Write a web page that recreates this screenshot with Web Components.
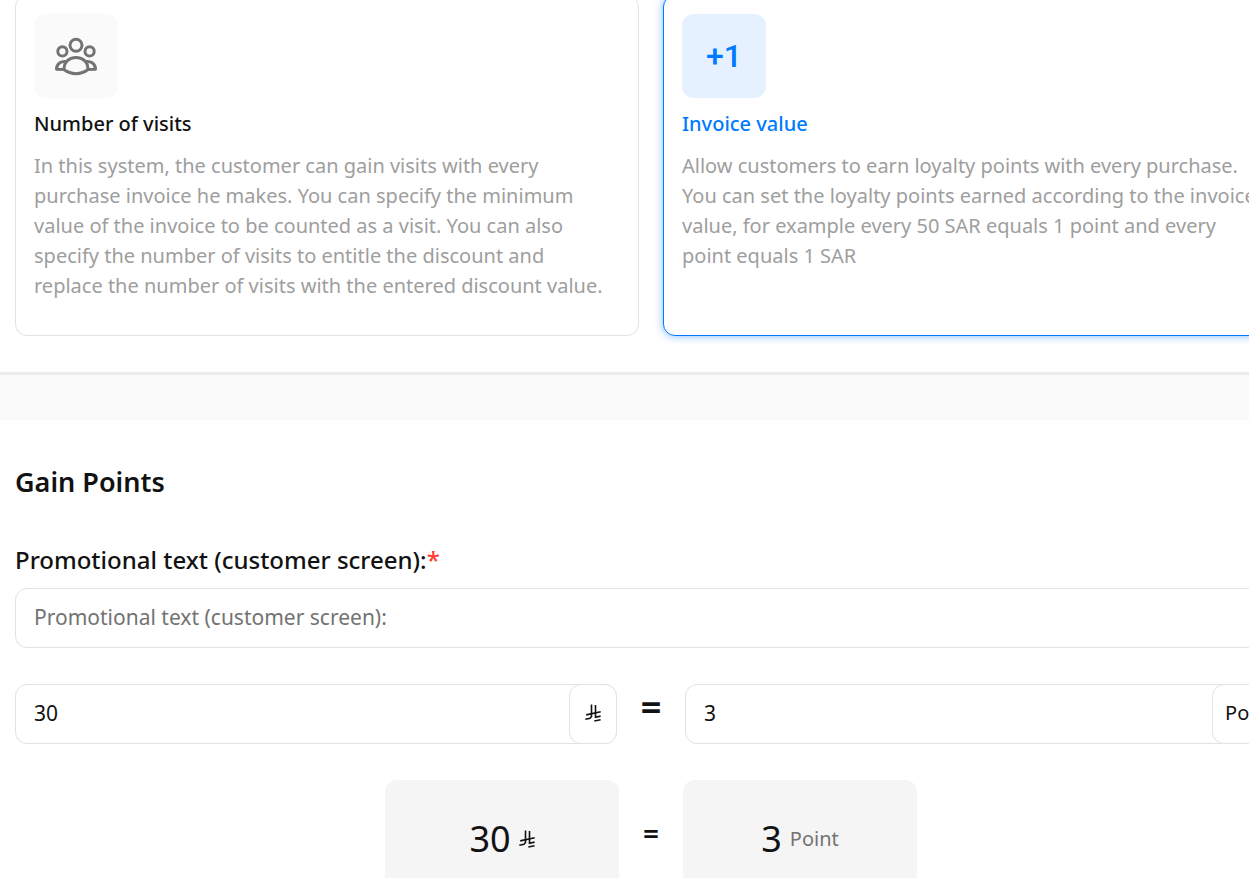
<!DOCTYPE html>
<html lang="en">
<head>
<meta charset="utf-8">
<title>Loyalty system</title>
<style>
    html { overflow: hidden; }
    body {
        --text: #121212;
        --muted: #737373;
        --soft: #9e9e9e;
        --line: #e2e2e2;
        --primary: #007aff;
        margin: 0;
        background: #fff;
        color: var(--text);
        font-family: "Noto Sans", sans-serif;
        font-size: 20px;
        line-height: 30px;
    }
</style>
</head>
<body>
<loyalty-page>
    <system-card slot="systems" heading="Number of visits">
        <svg slot="icon" width="44" height="44" viewBox="0 0 44 44" fill="none" stroke="#737373" stroke-width="3" stroke-linejoin="round">
            <circle cx="22" cy="11.300" r="6"/>
            <circle cx="8.400" cy="17.400" r="4.600"/>
            <circle cx="35.600" cy="17.400" r="4.600"/>
            <path d="M10 35.500C10 28 15 23.500 22 23.500S34 28 34 35.500C27 41 17 41 10 35.500Z"/>
            <path d="M13 27.800C7 26.500 2.500 30 2.500 35.200L10 35.500M31 27.800C37 26.500 41.500 30 41.500 35.200L34 35.500"/>
        </svg>
        In this system, the customer can gain visits with every purchase invoice he makes. You can specify the minimum value of the invoice to be counted as a visit. You can also specify the number of visits to entitle the discount and replace the number of visits with the entered discount value.
    </system-card>
    <system-card slot="systems" heading="Invoice value" active>
        <span slot="icon">+1</span>
        Allow customers to earn loyalty points with every purchase. You can set the loyalty points earned according to the invoice value, for example every 50 SAR equals 1 point and every point equals 1 SAR
    </system-card>

    <gain-points></gain-points>
</loyalty-page>

<script>
class LoyaltyPage extends HTMLElement {
    constructor() {
        super();
        this.attachShadow({ mode: 'open' })
            .innerHTML = `<style>
                            :host { display: block; width: calc(100% + 53px); }
                            .systems { display: grid; grid-template-columns: 1fr 1fr; gap: 24px;
                                margin-top: -5px; padding: 0 15px 36px; border-bottom: 3px solid #ebebeb; }
                            .divider { height: 45px; background: #fafafa; }
                        </style>
                        <section class="systems"><slot name="systems"></slot></section>
                        <div class="divider"></div>
                        <slot></slot>`;
    }
}
window.customElements.define('loyalty-page', LoyaltyPage);

class SystemCard extends HTMLElement {
    constructor() {
        super();
        this.attachShadow({ mode: 'open' })
            .innerHTML = `<style>
                            :host { display: block; box-sizing: border-box; padding: 18px 18px 34px;
                                border: 1px solid var(--line); border-radius: 12px; background: #fff; }
                            .icon { display: flex; align-items: center; justify-content: center;
                                width: 84px; height: 84px; border-radius: 12px; background: #fafafa; }
                            h3 { margin: 11px 0 12px; font-size: 20px; line-height: 30px; font-weight: 500; }
                            p { margin: 0; padding-right: 12px; color: var(--soft); }
                            ::slotted(span) { font-family: Roboto, sans-serif; font-size: 32px; font-weight: 500; }
                            :host([active]) { border-color: var(--primary); box-shadow: 0 0 8px rgba(0, 122, 255, .5); }
                            :host([active]) .icon { background: #e5f1ff; color: var(--primary); }
                            :host([active]) h3 { color: var(--primary); }
                        </style>
                        <div class="icon"><slot name="icon"></slot></div>
                        <h3></h3>
                        <p><slot></slot></p>`;
    }

    connectedCallback() {
        this.shadowRoot.querySelector('h3').textContent = this.getAttribute('heading');
    }
}
window.customElements.define('system-card', SystemCard);

// Saudi riyal sign
class RiyalSign extends HTMLElement {
    constructor() {
        super();
        this.attachShadow({ mode: 'open' })
            .innerHTML = `<style>
                            :host { display: inline-flex; }
                            svg { display: block; width: 16px; height: 18px; fill: none;
                                stroke: currentColor; stroke-width: 1.600; }
                        </style>
                        <svg viewBox="0 0 16 18" role="img" aria-label="SAR">
                            <path d="M6.500 .5V12.500L5 14.300L.3 15.300M10.500 1V13.200L15.600 12.100"/>
                            <path d="M1.200 10.900L15.700 7.800M9.300 17L15.600 15.700"/>
                        </svg>`;
    }
}
window.customElements.define('riyal-sign', RiyalSign);

// number box with its unit in a tab at the end
class UnitInput extends HTMLElement {
    constructor() {
        super();
        this.attachShadow({ mode: 'open' })
            .innerHTML = `<style>
                            :host { display: flex; box-sizing: border-box; height: 60px;
                                border: 1px solid var(--line); border-radius: 12px; }
                            input { flex: 1; min-width: 0; box-sizing: border-box; padding: 0 18px 2px; border: 0;
                                background: none; outline: none; color: inherit; font: inherit; }
                            label { display: flex; align-items: center; justify-content: center; box-sizing: border-box;
                                min-width: 48px; margin: -1px; padding: 0 12px 2px; border: 1px solid var(--line);
                                border-radius: 12px; background: #fff; font-size: 20px; }
                        </style>
                        <input type="text" inputmode="numeric" id="amount">
                        <label for="amount"><slot></slot></label>`;
    }

    connectedCallback() {
        this.shadowRoot.querySelector('input').value = this.getAttribute('value');
    }
}
window.customElements.define('unit-input', UnitInput);

class PointTile extends HTMLElement {
    constructor() {
        super();
        this.attachShadow({ mode: 'open' })
            .innerHTML = `<style>
                            :host { display: flex; align-items: center; justify-content: center; gap: 8px;
                                box-sizing: border-box; width: 234px; height: 118px;
                                border-radius: 12px; background: #f5f5f5; }
                            b { font-size: 36px; line-height: 54px; font-weight: 400; }
                            ::slotted(span) { color: var(--muted); }
                        </style>
                        <b></b><slot></slot>`;
    }

    connectedCallback() {
        this.shadowRoot.querySelector('b').textContent = this.getAttribute('value');
    }
}
window.customElements.define('point-tile', PointTile);

class GainPoints extends HTMLElement {
    constructor() {
        super();
        this.attachShadow({ mode: 'open' })
            .innerHTML = `<style>
                            :host { display: block; padding: 41px 15px; }
                            h2 { margin: 0 0 39px; font-size: 27px; line-height: 42px; font-weight: 600; }
                            .label { display: block; margin-bottom: 10px; font-size: 24px; line-height: 36px; font-weight: 500; }
                            .label span { color: #ff3b30; }
                            .promo { display: block; box-sizing: border-box; width: 100%; height: 60px; padding: 0 18px 2px;
                                border: 1px solid var(--line); border-radius: 12px; outline: none;
                                color: inherit; font: inherit; font-size: 21px; }
                            .promo::placeholder { color: var(--muted); opacity: 1; }
                            .rate { display: grid; grid-template-columns: 1fr 68px 1fr; margin-top: 36px; font-size: 21px; }
                            .preview { display: flex; align-items: center; justify-content: center; margin-top: 36px; }
                            .equals { width: 64px; padding-bottom: 12px; font-size: 28px; line-height: 42px;
                                font-weight: 600; text-align: center; }
                            .rate .equals { width: auto; padding: 0; font-size: 36px; line-height: 46px; font-weight: 700; }
                        </style>
                        <h2>Gain Points</h2>
                        <label class="label" for="promo">Promotional text (customer screen):<span>*</span></label>
                        <input class="promo" id="promo" type="text" placeholder="Promotional text (customer screen):">
                        <div class="rate">
                            <unit-input value="30"><riyal-sign></riyal-sign></unit-input>
                            <div class="equals">=</div>
                            <unit-input value="3">Point</unit-input>
                        </div>
                        <div class="preview">
                            <point-tile value="30"><riyal-sign></riyal-sign></point-tile>
                            <div class="equals">=</div>
                            <point-tile value="3"><span>Point</span></point-tile>
                        </div>`;
    }
}
window.customElements.define('gain-points', GainPoints);
</script>
</body>
</html>
